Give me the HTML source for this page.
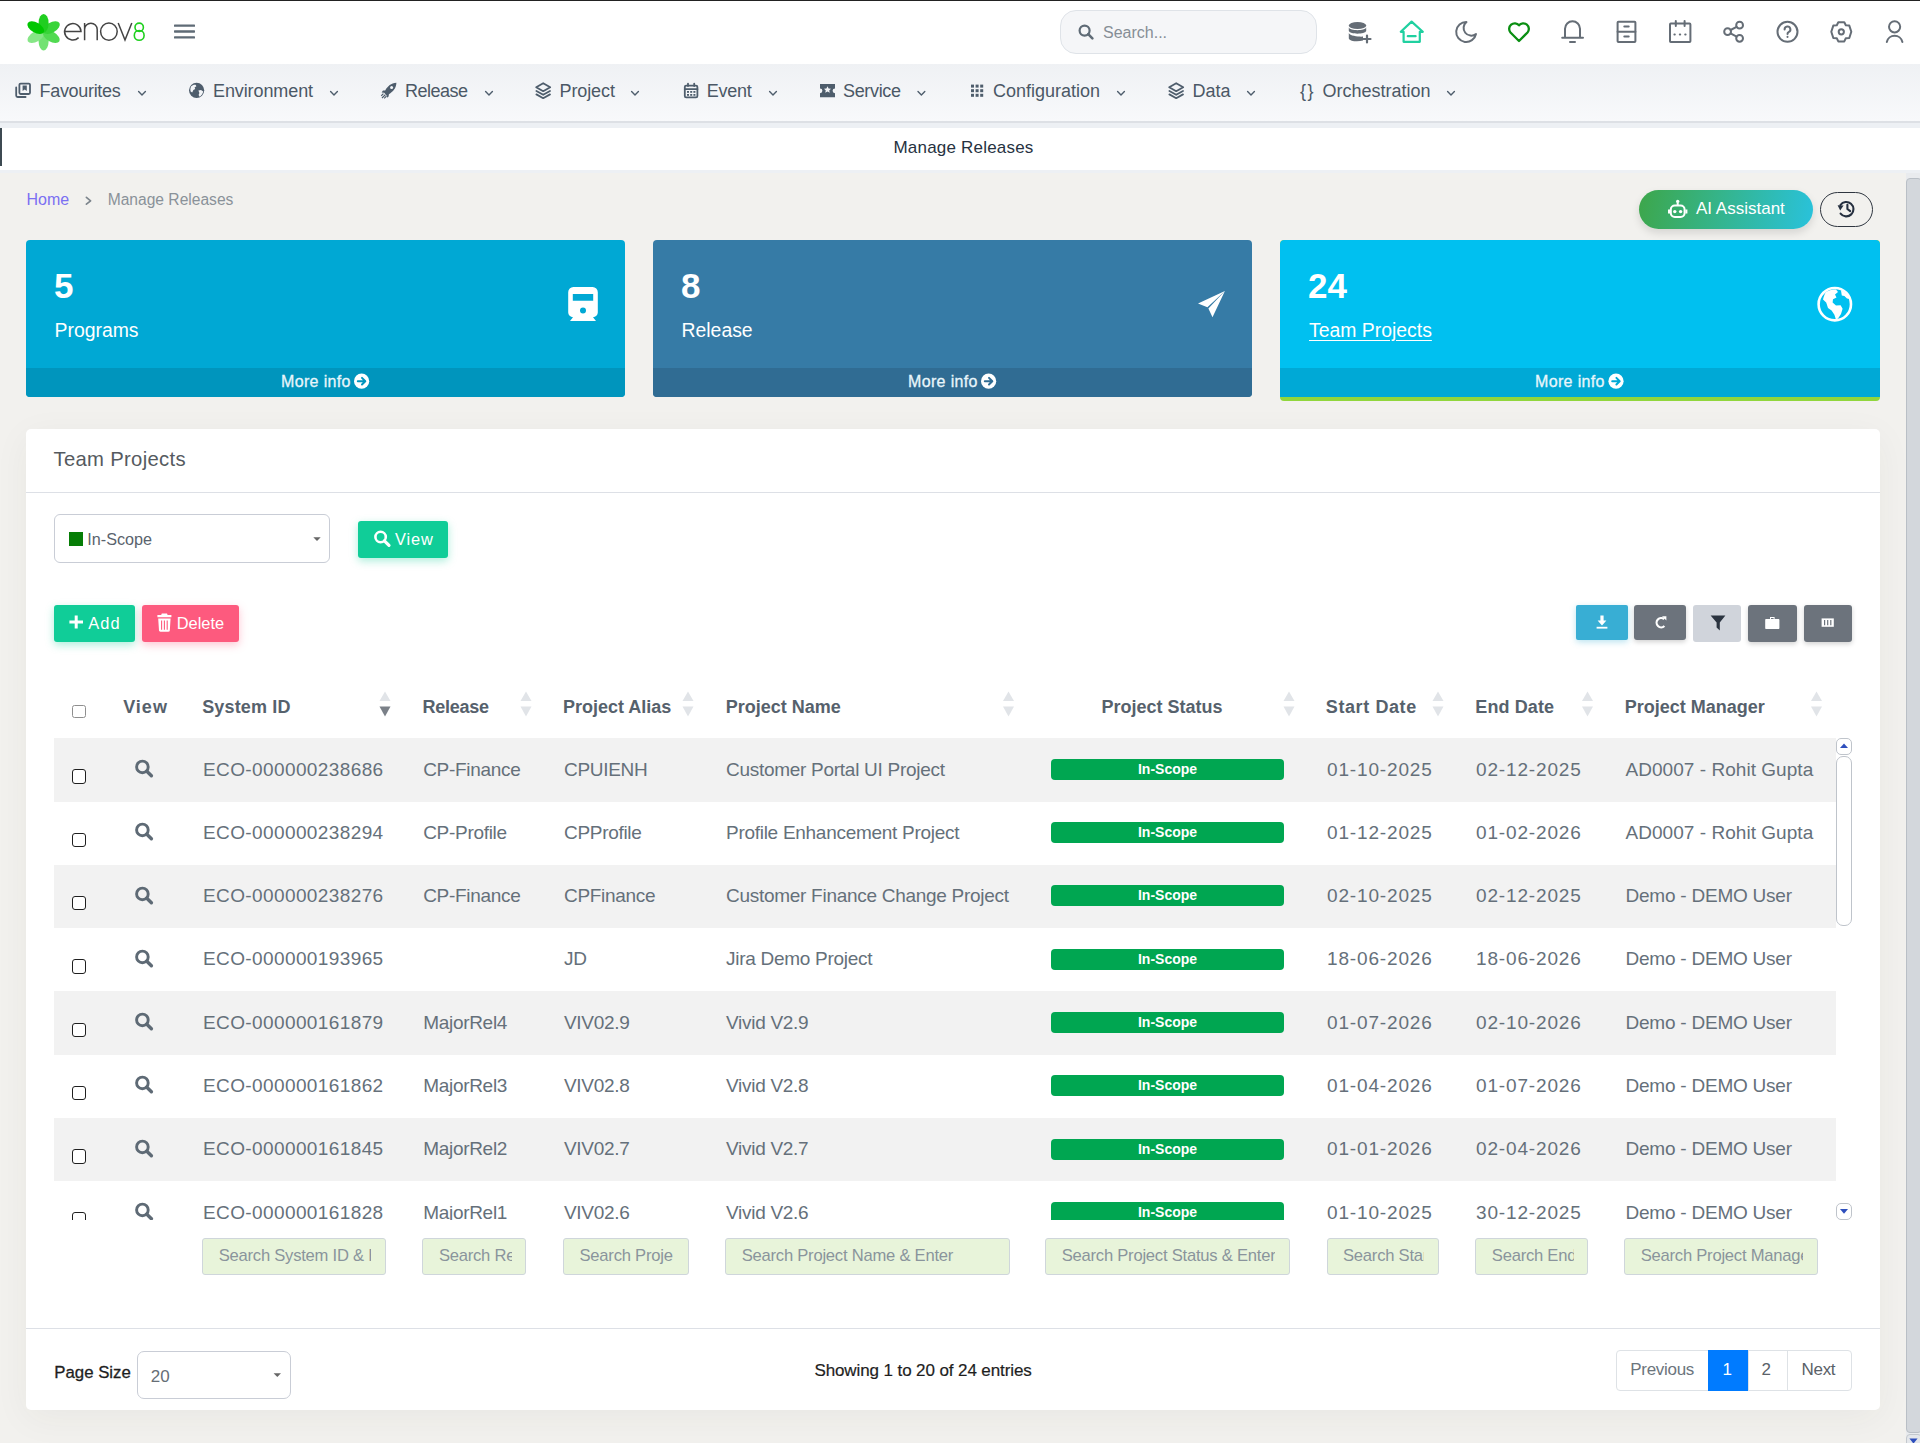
<!DOCTYPE html>
<html><head><meta charset="utf-8">
<style>
*{box-sizing:border-box;margin:0;padding:0}
html,body{width:1920px;height:1443px;overflow:hidden}
body{position:relative;background:#f2f1ee;font-family:"Liberation Sans",sans-serif;color:#5f6b76}
.abs{position:absolute}
#topline{left:0;top:0;width:1920px;height:1px;background:#222}
#header{left:0;top:1px;width:1920px;height:63px;background:#fff}
#nav{left:0;top:64px;width:1920px;height:57px;background:linear-gradient(#eff1f4,#f8f9fb)}
#navline{left:0;top:121px;width:1920px;height:2px;background:#dde0e5}
#navgap{left:0;top:123px;width:1920px;height:5px;background:#edf0f4}
#titlebar{left:0;top:128px;width:1920px;height:42px;background:#fff}
#titlegap{left:0;top:170px;width:1920px;height:3px;background:#edf0f4}
#titlemark{left:0;top:128px;width:2px;height:38px;background:#3d4a52}
.navitem{position:absolute;top:80px;height:22px;font-size:18px;color:#4b5866;white-space:nowrap;line-height:22px}
.navitem svg{position:absolute;top:3px}
.navitem .chev{position:absolute;top:0}
.cnum{font-size:35px;font-weight:bold;color:#fff;line-height:40px}
.clbl{font-size:19.4px;color:#fff;line-height:24px}
.cmore{top:372px;font-size:16px;color:#e8f6fb;line-height:20px;letter-spacing:0.35px;-webkit-text-stroke:0.3px #e8f6fb}
.th{top:697px;font-size:18px;font-weight:bold;line-height:20px;color:#56616c;white-space:nowrap}
.td{font-size:19px;line-height:20px;color:#65707a;white-space:nowrap}
.badge{width:233px;height:21px;border-radius:4px;background:#00a651;color:#fff;font-weight:bold;font-size:14px;line-height:21px;text-align:center}
.sin{top:1238.2px;height:36.6px;background:#e8f4da;border:1px solid #cfd6db;border-radius:3px;overflow:hidden;white-space:nowrap;font-size:16.6px;line-height:34px;color:#8a949c}
.sclip{position:absolute;left:15.5px;top:0;height:34px;overflow:hidden}
.sin span{position:absolute;left:0;top:0;letter-spacing:-0.23px}
.pg{top:1360px;font-size:17px;line-height:20px;letter-spacing:-0.3px}
.hicon{position:absolute;top:18px;width:26px;height:26px}
</style></head>
<body>
<div id="topline" class="abs"></div>
<div id="header" class="abs"></div>
<div id="nav" class="abs"></div>
<div id="navline" class="abs"></div>
<div id="navgap" class="abs"></div>
<div id="titlebar" class="abs"></div>
<div id="titlegap" class="abs"></div>
<div id="titlemark" class="abs"></div>

<svg class="abs" style="left:0;top:0" width="220" height="64" viewBox="0 0 220 64">
 <g transform="translate(43.6,32.2)">
  <ellipse cx="0" cy="-9" rx="5" ry="9.3" fill="#72e272" transform="rotate(180)"/>
  <ellipse cx="0" cy="-9" rx="5" ry="9.3" fill="#86e686" transform="rotate(240)"/>
  <ellipse cx="0" cy="-9" rx="5" ry="9.3" fill="#52da52" transform="rotate(120)"/>
  <ellipse cx="0" cy="-9" rx="5" ry="9.3" fill="#38d438" transform="rotate(60)"/>
  <ellipse cx="0" cy="-9" rx="5" ry="9.3" fill="#20ce20" transform="rotate(0)"/>
  <ellipse cx="0" cy="-9" rx="5" ry="9.3" fill="#00c600" transform="rotate(300)"/>
 </g>
 <g fill="none" stroke="#444" stroke-width="1.5">
  <path d="M64.8 31.5 H81 A8.2 8.2 0 1 0 78.6 37.6"/>
  <path d="M84.6 40.2 V23 M84.6 29.5 A6.3 6.3 0 0 1 97.2 29.5 V40.2"/>
  <ellipse cx="108.9" cy="31.6" rx="8.3" ry="8.6"/>
  <path d="M118.2 23 L125 40 L131.8 23"/>
 </g>
 <g fill="none" stroke="#1ed01e" stroke-width="1.6">
  <circle cx="139.2" cy="27.3" r="4.2"/>
  <circle cx="139.2" cy="35.4" r="4.9"/>
 </g>
 <g fill="#5f6b76">
  <rect x="174" y="24.4" width="21" height="2.4" rx="0.6"/>
  <rect x="174" y="30.3" width="21" height="2.4" rx="0.6"/>
  <rect x="174" y="36.2" width="21" height="2.4" rx="0.6"/>
 </g>
</svg>
<div class="abs" style="left:1060px;top:10px;width:257px;height:44px;border:1px solid #dfe3e8;border-radius:16px;background:#f5f6f8"></div>
<svg class="abs" style="left:1076px;top:22px" width="20" height="20" viewBox="0 0 20 20"><circle cx="8.6" cy="8.6" r="5" fill="none" stroke="#5f6b76" stroke-width="2.2"/><path d="M12.2 12.2 L16.4 16.4" stroke="#5f6b76" stroke-width="2.6" stroke-linecap="round"/></svg>
<div class="abs" style="left:1103px;top:22.5px;font-size:16px;line-height:20px;color:#868e96">Search...</div>
<svg class="abs" style="left:1340px;top:14px" width="580" height="36" viewBox="1340 14 580 36" fill="none" stroke="#656d76" stroke-width="2" stroke-linecap="round" stroke-linejoin="round">
 <!-- db plus -->
 <g fill="#656d76" stroke="none">
  <ellipse cx="1357.5" cy="25.5" rx="8.7" ry="3.6"/>
  <path d="M1348.8 27.5 C1350 31 1365 31 1366.2 27.5 V31 C1365 34.5 1350 34.5 1348.8 31Z"/>
  <path d="M1348.8 33 C1350 36.5 1362 37 1363 36.5 V40.5 C1358 42 1350 41.5 1348.8 38.5Z"/>
 </g>
 <path d="M1367 35.5 V42.5 M1363.5 39 H1370.5" stroke-width="2.2"/>
 <!-- home teal -->
 <g stroke="#20d0a0" stroke-width="2.2">
  <path d="M1400.8 31.8 L1411.6 21.6 L1422.8 31.8 H1419.8 V41.8 H1403.6 V31.8 Z"/>
  <path d="M1407.8 36.2 H1415.6"/>
 </g>
 <!-- moon -->
 <path d="M1466.5 22 A10 10 0 1 0 1476 34 A7.6 7.6 0 0 1 1466.5 22 Z"/>
 <!-- heart green -->
 <path stroke="#0a8f12" stroke-width="2.3" d="M1519 41 L1510.5 32.5 A5.2 5.2 0 0 1 1519 25.3 A5.2 5.2 0 0 1 1527.5 32.5 Z"/>
 <!-- bell -->
 <path d="M1572.5 21.3 A7.5 7.5 0 0 1 1580 28.8 V37.8 H1565 V28.8 A7.5 7.5 0 0 1 1572.5 21.3 Z M1562.2 37.8 H1583 M1570 42 H1575"/>
 <!-- cabinet -->
 <rect x="1617.6" y="21.8" width="17.8" height="20.2" rx="0.8"/>
 <path d="M1617.6 31.8 H1635.4 M1624.3 26.5 H1628.7 M1624.3 36.5 H1628.7"/>
 <!-- calendar -->
 <rect x="1670" y="23.6" width="20.4" height="18.4" rx="0.8"/>
 <path d="M1675.8 21 V26 M1684.6 21 V26 M1674.4 34.6 H1674.8 M1679.8 34.6 H1680.2 M1685.2 34.6 H1685.6"/>
 <!-- share -->
 <circle cx="1727.6" cy="31.7" r="3.4"/><circle cx="1739.6" cy="25.2" r="3.4"/><circle cx="1739.6" cy="38.3" r="3.4"/>
 <path d="M1730.6 30 L1736.6 26.8 M1730.6 33.4 L1736.6 36.6"/>
 <!-- help -->
 <circle cx="1787.5" cy="31.8" r="10"/>
 <path d="M1784.6 29.4 A2.9 2.9 0 1 1 1788.6 32.1 C1787.8 32.5 1787.5 33 1787.5 34 M1787.5 36.8 V37"/>
 <!-- gear -->
 <path d="M1838.3 22.2 L1844.3 22.2 L1845.8 25.3 L1849.3 25.6 L1851.3 31.8 L1849.3 38 L1845.8 38.3 L1844.3 41.4 L1838.3 41.4 L1836.8 38.3 L1833.3 38 L1831.3 31.8 L1833.3 25.6 L1836.8 25.3 Z"/>
 <circle cx="1841.3" cy="31.8" r="2.6"/>
 <!-- user -->
 <circle cx="1894.6" cy="26.8" r="5.6"/>
 <path d="M1886.8 42 A8 8 0 0 1 1902.4 42"/>
</svg>

<svg class="abs" style="left:0;top:64px" width="1500" height="57" viewBox="0 64 1500 57">
 <g fill="none" stroke="#4e5d6c" stroke-width="1.8" stroke-linejoin="round" stroke-linecap="round">
  <!-- favourites -->
  <path d="M16.2 87.5 V95.6 C16.2 96.4 16.8 97 17.6 97 H25.6"/>
  <rect x="19.4" y="83.6" width="10.6" height="10.4" rx="1.2"/>
  <!-- chevrons -->
  <path d="M138.6 91.6 L142 95 L145.4 91.6" stroke-width="1.4"/>
  <path d="M330.6 91.6 L334 95 L337.4 91.6" stroke-width="1.4"/>
  <path d="M485.6 91.6 L489 95 L492.4 91.6" stroke-width="1.4"/>
  <path d="M631.6 91.6 L635 95 L638.4 91.6" stroke-width="1.4"/>
  <path d="M769.6 91.6 L773 95 L776.4 91.6" stroke-width="1.4"/>
  <path d="M918 91.6 L921.4 95 L924.8 91.6" stroke-width="1.4"/>
  <path d="M1117.6 91.6 L1121 95 L1124.4 91.6" stroke-width="1.4"/>
  <path d="M1247.6 91.6 L1251 95 L1254.4 91.6" stroke-width="1.4"/>
  <path d="M1447.6 91.6 L1451 95 L1454.4 91.6" stroke-width="1.4"/>
  <!-- project layers -->
  <path d="M543.2 83.2 L550.2 87.2 L543.2 91.2 L536.2 87.2 Z"/>
  <path d="M536.4 91 L543.2 94.8 L550 91"/>
  <path d="M536.4 94.4 L543.2 98.2 L550 94.4"/>
  <!-- data layers -->
  <path d="M1176.2 83.2 L1183.2 87.2 L1176.2 91.2 L1169.2 87.2 Z"/>
  <path d="M1169.4 91 L1176.2 94.8 L1183 91"/>
  <path d="M1169.4 94.4 L1176.2 98.2 L1183 94.4"/>
  <!-- event calendar -->
  <rect x="684.8" y="85.6" width="12.6" height="11.8" rx="1.4"/>
  <path d="M684.8 89.2 H697.4 M688 83.6 V86 M694.2 83.6 V86"/>
 </g>
 <g fill="#4e5d6c">
  <!-- favourites bookmark -->
  <path d="M22.6 85.4 H26.8 V91 L24.7 89.4 L22.6 91 Z"/>
  <!-- calendar dots -->
  <rect x="687" y="91" width="2" height="1.8"/><rect x="690.2" y="91" width="2" height="1.8"/><rect x="693.4" y="91" width="2" height="1.8"/>
  <rect x="687" y="94" width="2" height="1.8"/><rect x="690.2" y="94" width="2" height="1.8"/><rect x="693.4" y="94" width="2" height="1.8"/>
  <!-- globe -->
  <circle cx="196.6" cy="90.3" r="7.6"/>
  <!-- rocket -->
  <path d="M396.4 82.8 C391 83 387.8 86.2 385.2 90.4 L383 90.6 L381.6 92.4 L384.2 92.8 L386.6 95.4 L387 97.8 L388.6 96.4 L388.9 94.2 C393 91.6 396.2 88.4 396.4 82.8 Z"/>
  <path d="M382 98 L385.4 94.6 M381.2 95.8 L383.4 93.6 M384.2 98.4 L386.4 96.2" stroke="#4e5d6c" stroke-width="1.2"/>
  <!-- ticket -->
  <path d="M820 84 H835 V88.4 A2.4 2.4 0 0 0 835 93.2 V97.2 H820 V93.2 A2.4 2.4 0 0 0 820 88.4 Z"/>
  <!-- config grid -->
  <rect x="971" y="84.6" width="3" height="3"/><rect x="975.6" y="84.6" width="3" height="3"/><rect x="980.2" y="84.6" width="3" height="3"/>
  <rect x="971" y="89.2" width="3" height="3"/><rect x="975.6" y="89.2" width="3" height="3"/><rect x="980.2" y="89.2" width="3" height="3"/>
  <rect x="971" y="93.8" width="3" height="3"/><rect x="975.6" y="93.8" width="3" height="3"/><rect x="980.2" y="93.8" width="3" height="3"/>
 </g>
 <g fill="#f3f5f8">
  <!-- globe continents -->
  <path d="M191 86.5 C192.5 85 194 84.6 195.6 84.8 L196.4 86.2 L194.6 87.4 L195.2 89 L193.4 90 L192.2 92.4 L190.6 91.4 C190.2 89.6 190.4 88 191 86.5 Z"/>
  <path d="M198.4 90.6 L201 90 L203.2 91.6 C202.8 93.8 201.4 95.8 199.6 96.8 L198.6 95 L199.4 93 Z"/>
  <circle cx="397.6" cy="86.2" r="0" />
  <path d="M827.5 86.2 L828.6 88.6 L831 88.8 L829.2 90.4 L829.8 92.8 L827.5 91.5 L825.2 92.8 L825.8 90.4 L824 88.8 L826.4 88.6 Z"/>
 </g>
 <circle cx="391.6" cy="87.6" r="1.5" fill="#f3f5f8"/>
</svg>
<div class="navitem" style="left:39.5px;letter-spacing:-0.31px">Favourites</div>
<div class="navitem" style="left:213px;letter-spacing:-0.1px">Environment</div>
<div class="navitem" style="left:405px;letter-spacing:-0.5px">Release</div>
<div class="navitem" style="left:559.5px;letter-spacing:-0.1px">Project</div>
<div class="navitem" style="left:706.8px;letter-spacing:-0.25px">Event</div>
<div class="navitem" style="left:843px;letter-spacing:-0.33px">Service</div>
<div class="navitem" style="left:993px">Configuration</div>
<div class="navitem" style="left:1192.4px">Data</div>
<div class="navitem" style="left:1300px;letter-spacing:1.5px">{}</div>
<div class="navitem" style="left:1322.4px">Orchestration</div>

<div class="abs" style="left:0;top:138px;width:1927px;text-align:center;font-size:17px;line-height:20px;color:#263241;letter-spacing:0.2px">Manage Releases</div>
<div class="abs" style="left:26.5px;top:190px;font-size:16px;line-height:20px;color:#7b6ff2">Home</div>
<svg class="abs" style="left:80px;top:190px" width="20" height="20" viewBox="80 190 20 20"><path d="M86.4 197.4 L90.6 200.8 L86.4 204.2" fill="none" stroke="#7d858c" stroke-width="1.7" stroke-linecap="round" stroke-linejoin="round"/></svg>
<div class="abs" style="left:107.7px;top:190px;font-size:15.6px;line-height:20px;color:#8a9299">Manage Releases</div>
<div class="abs" style="left:1639px;top:190px;width:174px;height:39px;border-radius:20px;background:linear-gradient(100deg,#3da64a 0%,#35b48a 45%,#29c2dc 100%);box-shadow:0 4px 8px rgba(0,0,0,0.12)"></div>
<svg class="abs" style="left:1664px;top:196px" width="28" height="26" viewBox="1664 196 28 26">
 <g fill="none" stroke="#fff" stroke-width="2" stroke-linejoin="round">
  <rect x="1670.8" y="205.6" width="13.8" height="11.4" rx="4"/>
  <path d="M1677.7 202.8 V205.6 M1669 209.6 V213.6 M1686.4 209.6 V213.6"/>
 </g>
 <circle cx="1677.7" cy="201.4" r="1.7" fill="#fff"/>
 <circle cx="1674.8" cy="211.6" r="1.7" fill="#fff"/><circle cx="1680.6" cy="211.6" r="1.7" fill="#fff"/>
</svg>
<div class="abs" style="left:1696px;top:199px;font-size:17px;line-height:20px;color:#fff">AI Assistant</div>
<div class="abs" style="left:1820px;top:192px;width:53px;height:35px;border-radius:18px;border:1.3px solid #2f3640"></div>
<svg class="abs" style="left:1834px;top:198px" width="24" height="22" viewBox="1834 198 24 22">
 <g fill="none" stroke="#263040" stroke-width="2.1" stroke-linecap="round" stroke-linejoin="round">
  <path d="M1840.4 205 A7.2 7.2 0 1 1 1840.6 213.6"/>
  <path d="M1847.4 204.8 V209 L1850.2 211.2"/>
 </g>
 <path d="M1837.6 205.2 L1843.6 205.6 L1840.2 210.4 Z" fill="#263040"/>
</svg>

<!-- cards -->
<div class="abs" style="left:26px;top:240px;width:599px;height:157px;background:#00a8d4;border-radius:4px;overflow:hidden"><div class="abs" style="left:0;top:128px;width:599px;height:29px;background:#0095bd"></div></div>
<div class="abs" style="left:653px;top:240px;width:599px;height:157px;background:#367ba6;border-radius:4px;overflow:hidden"><div class="abs" style="left:0;top:128px;width:599px;height:29px;background:#306c93"></div></div>
<div class="abs" style="left:1280px;top:240px;width:600px;height:161px;background:#91d63c;border-radius:4px;overflow:hidden"><div class="abs" style="left:0;top:0;width:600px;height:157px;background:#00c0f0;border-radius:4px 4px 0 0"></div><div class="abs" style="left:0;top:128px;width:600px;height:29px;background:#00a9d6"></div></div>

<div class="abs cnum" style="left:54px;top:266px">5</div>
<div class="abs cnum" style="left:681px;top:266px">8</div>
<div class="abs cnum" style="left:1308px;top:266px">24</div>
<div class="abs clbl" style="left:54.5px;top:318px">Programs</div>
<div class="abs clbl" style="left:681.5px;top:318px">Release</div>
<div class="abs clbl" style="left:1309px;top:318px;text-decoration:underline;text-underline-offset:3px">Team Projects</div>
<div class="abs cmore" style="left:281px">More info</div>
<div class="abs cmore" style="left:908px">More info</div>
<div class="abs cmore" style="left:1535px">More info</div>
<svg class="abs" style="left:0;top:360px" width="1920" height="40" viewBox="0 360 1920 40">
 <g fill="#fff">
  <circle cx="361.6" cy="381.2" r="7.6"/><circle cx="988.6" cy="381.2" r="7.6"/><circle cx="1616" cy="381.2" r="7.6"/>
 </g>
 <g fill="none" stroke-width="2" stroke-linecap="round" stroke-linejoin="round">
  <path stroke="#0095bd" d="M357.8 381.2 H365 M362 377.9 L365.3 381.2 L362 384.5"/>
  <path stroke="#306c93" d="M984.8 381.2 H992 M989 377.9 L992.3 381.2 L989 384.5"/>
  <path stroke="#00a9d6" d="M1612.2 381.2 H1619.4 M1616.4 377.9 L1619.7 381.2 L1616.4 384.5"/>
 </g>
</svg>
<svg class="abs" style="left:560px;top:280px" width="700" height="50" viewBox="560 280 700 50">
 <path fill="#fff" d="M573.4 287 H592.6 A5.2 5.2 0 0 1 597.8 292.2 V312.4 A4.8 4.8 0 0 1 593 317.2 L596 321 H570 L573 317.2 A4.8 4.8 0 0 1 568.2 312.4 V292.2 A5.2 5.2 0 0 1 573.4 287 Z M572.8 294 V300.8 H593.2 V294 Z M583 307.4 A3 3 0 1 0 583 313.4 A3 3 0 1 0 583 307.4 Z" fill-rule="evenodd"/>
 <path fill="#fff" d="M1224.9 291.1 L1198 303.5 L1207.4 307.2 Z M1224.9 291.1 L1208.4 308.4 L1212.5 317.3 Z"/>
</svg>
<svg class="abs" style="left:1812px;top:282px" width="46" height="44" viewBox="1812 282 46 44">
 <circle cx="1834.8" cy="304.2" r="16.2" fill="none" stroke="#fff" stroke-width="2.6"/>
 <path fill="#fff" d="M1826 292 C1829 290 1833 289 1836 289.6 L1838 292 L1835 294.6 L1836.5 297.6 L1833 299.2 L1832.6 302.6 L1836 305.4 L1840.6 305.2 L1842.6 308.8 L1841 314 L1838 318.6 L1836 319.8 L1834.4 314.8 L1831.6 310.6 L1828 308 L1826.2 302.6 L1823 299.6 C1823.6 296.6 1824.6 294 1826 292 Z"/>
 <path fill="#fff" d="M1841 290.6 C1845 292 1848.6 295.6 1850 299 L1847 298.6 L1844.4 296 L1841.8 295.6 Z"/>
</svg>

<div class="abs" style="left:26px;top:429px;width:1854px;height:981px;background:#fff;border-radius:5px;box-shadow:0 8px 36px rgba(60,50,30,0.05)"></div>
<div class="abs" style="left:53.5px;top:447px;font-size:20.3px;line-height:24px;color:#555a60;letter-spacing:0.3px">Team Projects</div>
<div class="abs" style="left:26px;top:491.5px;width:1854px;height:1px;background:#dde0e6"></div>
<div class="abs" style="left:54px;top:514px;width:276px;height:49px;border:1px solid #c9cdd6;border-radius:6px;background:#fff"></div>
<div class="abs" style="left:69px;top:532.3px;width:13.6px;height:13.4px;background:#067d06"></div>
<div class="abs" style="left:87.3px;top:529px;font-size:16.2px;line-height:20px;color:#5a636d">In-Scope</div>
<svg class="abs" style="left:310px;top:534px" width="14" height="10"><path d="M3.3 3.3 H10.7 L7 7 Z" fill="#666"/></svg>
<div class="abs" style="left:358px;top:521px;width:90px;height:37px;background:#10cd98;border-radius:3px;box-shadow:0 3px 8px rgba(16,205,152,0.35)"></div>
<svg class="abs" style="left:372px;top:528px" width="22" height="22" viewBox="0 0 22 22"><circle cx="8.6" cy="9" r="5.2" fill="none" stroke="#fff" stroke-width="2.6"/><path d="M12.4 12.8 L17 17.4" stroke="#fff" stroke-width="3.2" stroke-linecap="round"/></svg>
<div class="abs" style="left:395px;top:529px;font-size:16.4px;line-height:20px;color:#fff;letter-spacing:0.9px">View</div>
<div class="abs" style="left:54px;top:605px;width:81px;height:37px;background:#10cd98;border-radius:3px;box-shadow:0 3px 8px rgba(16,205,152,0.35)"></div>
<svg class="abs" style="left:66px;top:612px" width="20" height="20" viewBox="0 0 20 20"><path d="M10.2 3.4 V16.6 M3.4 10 H17" stroke="#fff" stroke-width="3" /></svg>
<div class="abs" style="left:88.3px;top:613px;font-size:16.4px;line-height:20px;color:#fff;letter-spacing:1.1px">Add</div>
<div class="abs" style="left:142px;top:605px;width:97px;height:37px;background:#fd5a7e;border-radius:3px;box-shadow:0 3px 8px rgba(253,90,126,0.35)"></div>
<svg class="abs" style="left:155px;top:612px" width="20" height="22" viewBox="0 0 20 22"><path fill="#fff" d="M6.8 1.6 H12 L12.6 3 H16.4 V5.2 H2.4 V3 H6.2 Z M3.2 6.4 H15.6 L14.8 18.6 C14.7 19.4 14.2 19.8 13.4 19.8 H5.4 C4.6 19.8 4.1 19.4 4 18.6 Z"/><path d="M6.6 8.4 V17.8 M9.4 8.4 V17.8 M12.2 8.4 V17.8" stroke="#fd5a7e" stroke-width="1.1"/></svg>
<div class="abs" style="left:176.7px;top:613px;font-size:16.4px;line-height:20px;color:#fff">Delete</div>
<div class="abs" style="left:1576px;top:605px;width:52px;height:35px;background:#38aed4;border-radius:2px;box-shadow:0 2px 6px rgba(56,174,212,0.35)"></div>
<div class="abs" style="left:1634px;top:605px;width:52px;height:35px;background:#6c737c;border-radius:3px;box-shadow:0 2px 5px rgba(0,0,0,0.18)"></div>
<div class="abs" style="left:1693px;top:605px;width:48px;height:37px;background:#d0d4db;border-radius:3px"></div>
<div class="abs" style="left:1748px;top:605px;width:49px;height:37px;background:#6c737c;border-radius:3px;box-shadow:0 2px 5px rgba(0,0,0,0.18)"></div>
<div class="abs" style="left:1804px;top:605px;width:48px;height:37px;background:#6c737c;border-radius:3px;box-shadow:0 2px 5px rgba(0,0,0,0.18)"></div>
<svg class="abs" style="left:1576px;top:605px" width="280" height="40" viewBox="1576 605 280 40">
 <path fill="#fff" d="M1600.4 615.6 H1603.6 V620.6 H1606.4 L1602 625.4 L1597.6 620.6 H1600.4 Z"/>
 <rect x="1596.6" y="626.8" width="10.8" height="1.8" fill="#fff"/>
 <path d="M1664.2 619.2 A4.6 4.6 0 1 0 1664.4 626" fill="none" stroke="#fff" stroke-width="2.2"/>
 <path d="M1662 616.2 L1666.4 616.2 L1666.4 620.6 Z" fill="#fff"/>
 <path fill="#2b3440" d="M1710.6 615.6 H1725.4 L1719.8 622.6 V630.6 L1716.6 627.6 V622.6 Z"/>
 <path fill="#fff" d="M1770 617 H1774.6 V619 H1778.4 C1779 619 1779.4 619.4 1779.4 620 V628 C1779.4 628.6 1779 629 1778.4 629 H1766.2 C1765.6 629 1765.2 628.6 1765.2 628 V620 C1765.2 619.4 1765.6 619 1766.2 619 H1770 Z M1771 618 V619 H1773.6 V618 Z"/>
 <path fill="#fff" d="M1821.6 618.4 H1833.8 V626.8 H1821.6 Z"/>
 <path d="M1824.6 620 V625.2 M1827.7 620 V625.2 M1830.8 620 V625.2" stroke="#6c737c" stroke-width="1.2"/>
</svg>
<div class="abs th" style="left:123.2px;letter-spacing:1.0px">View</div>
<div class="abs th" style="left:202.2px;letter-spacing:0.15px">System ID</div>
<div class="abs th" style="left:422.4px;letter-spacing:-0.23px">Release</div>
<div class="abs th" style="left:563px;letter-spacing:0px">Project Alias</div>
<div class="abs th" style="left:725.8px;letter-spacing:0px">Project Name</div>
<div class="abs th" style="left:1101.4px;letter-spacing:0px">Project Status</div>
<div class="abs th" style="left:1325.8px;letter-spacing:0.6px">Start Date</div>
<div class="abs th" style="left:1475.3px;letter-spacing:0.1px">End Date</div>
<div class="abs th" style="left:1624.7px;letter-spacing:0px">Project Manager</div>
<div class="abs" style="left:72px;top:704.7px;width:13.5px;height:13.5px;border:1px solid #8f8f8f;border-radius:2.5px;background:#fff"></div>
<svg class="abs" style="left:0;top:680px" width="1920" height="50" viewBox="0 680 1920 50"><path d="M379.5 701 L385 691.6 L390.5 701 Z" fill="#e1e4e8"/><path d="M379.5 706.6 L385 716.4 L390.5 706.6 Z" fill="#7a8088"/><path d="M520.5 701 L526 691.6 L531.5 701 Z" fill="#e1e4e8"/><path d="M520.5 706.6 L526 716.4 L531.5 706.6 Z" fill="#e1e4e8"/><path d="M682.5 701 L688 691.6 L693.5 701 Z" fill="#e1e4e8"/><path d="M682.5 706.6 L688 716.4 L693.5 706.6 Z" fill="#e1e4e8"/><path d="M1003.0 701 L1008.5 691.6 L1014.0 701 Z" fill="#e1e4e8"/><path d="M1003.0 706.6 L1008.5 716.4 L1014.0 706.6 Z" fill="#e1e4e8"/><path d="M1283.5 701 L1289 691.6 L1294.5 701 Z" fill="#e1e4e8"/><path d="M1283.5 706.6 L1289 716.4 L1294.5 706.6 Z" fill="#e1e4e8"/><path d="M1432.5 701 L1438 691.6 L1443.5 701 Z" fill="#e1e4e8"/><path d="M1432.5 706.6 L1438 716.4 L1443.5 706.6 Z" fill="#e1e4e8"/><path d="M1582.0 701 L1587.5 691.6 L1593.0 701 Z" fill="#e1e4e8"/><path d="M1582.0 706.6 L1587.5 716.4 L1593.0 706.6 Z" fill="#e1e4e8"/><path d="M1811.0 701 L1816.5 691.6 L1822.0 701 Z" fill="#e1e4e8"/><path d="M1811.0 706.6 L1816.5 716.4 L1822.0 706.6 Z" fill="#e1e4e8"/></svg>
<div class="abs" style="left:54px;top:738px;width:1800px;height:482px;overflow:hidden">
<div class="abs" style="left:0;top:0.00px;width:1782px;height:63.59px;background:#f2f2f2"></div>
<div class="abs" style="left:18px;top:31.40px;width:14.4px;height:14.4px;border:1.3px solid #1f1f1f;border-radius:3px;background:#fff"></div>
<svg class="abs" style="left:79px;top:20.00px" width="22" height="22" viewBox="0 0 22 22"><circle cx="9.4" cy="8.9" r="5.8" fill="none" stroke="#5e6a75" stroke-width="2.9"/><path d="M13.8 13.2 L18.4 17.8" stroke="#5e6a75" stroke-width="3.4" stroke-linecap="round"/></svg>
<div class="abs td" style="left:149px;top:21.50px;letter-spacing:0.39px">ECO-000000238686</div>
<div class="abs td" style="left:369.2px;top:21.50px;letter-spacing:-0.3px">CP-Finance</div>
<div class="abs td" style="left:510px;top:21.50px;letter-spacing:-0.3px">CPUIENH</div>
<div class="abs td" style="left:672px;top:21.50px;letter-spacing:-0.28px">Customer Portal UI Project</div>
<div class="abs td" style="left:1273px;top:21.50px;letter-spacing:0.85px">01-10-2025</div>
<div class="abs td" style="left:1422px;top:21.50px;letter-spacing:0.85px">02-12-2025</div>
<div class="abs td" style="left:1571.5px;top:21.50px;letter-spacing:0.04px">AD0007 - Rohit Gupta</div>
<div class="abs badge" style="left:997px;top:20.80px">In-Scope</div>
<div class="abs" style="left:18px;top:94.69px;width:14.4px;height:14.4px;border:1.3px solid #1f1f1f;border-radius:3px;background:#fff"></div>
<svg class="abs" style="left:79px;top:83.29px" width="22" height="22" viewBox="0 0 22 22"><circle cx="9.4" cy="8.9" r="5.8" fill="none" stroke="#5e6a75" stroke-width="2.9"/><path d="M13.8 13.2 L18.4 17.8" stroke="#5e6a75" stroke-width="3.4" stroke-linecap="round"/></svg>
<div class="abs td" style="left:149px;top:84.79px;letter-spacing:0.39px">ECO-000000238294</div>
<div class="abs td" style="left:369.2px;top:84.79px;letter-spacing:-0.3px">CP-Profile</div>
<div class="abs td" style="left:510px;top:84.79px;letter-spacing:-0.3px">CPProfile</div>
<div class="abs td" style="left:672px;top:84.79px;letter-spacing:-0.28px">Profile Enhancement Project</div>
<div class="abs td" style="left:1273px;top:84.79px;letter-spacing:0.85px">01-12-2025</div>
<div class="abs td" style="left:1422px;top:84.79px;letter-spacing:0.85px">01-02-2026</div>
<div class="abs td" style="left:1571.5px;top:84.79px;letter-spacing:0.04px">AD0007 - Rohit Gupta</div>
<div class="abs badge" style="left:997px;top:84.09px">In-Scope</div>
<div class="abs" style="left:0;top:126.58px;width:1782px;height:63.59px;background:#f2f2f2"></div>
<div class="abs" style="left:18px;top:157.98px;width:14.4px;height:14.4px;border:1.3px solid #1f1f1f;border-radius:3px;background:#fff"></div>
<svg class="abs" style="left:79px;top:146.58px" width="22" height="22" viewBox="0 0 22 22"><circle cx="9.4" cy="8.9" r="5.8" fill="none" stroke="#5e6a75" stroke-width="2.9"/><path d="M13.8 13.2 L18.4 17.8" stroke="#5e6a75" stroke-width="3.4" stroke-linecap="round"/></svg>
<div class="abs td" style="left:149px;top:148.08px;letter-spacing:0.39px">ECO-000000238276</div>
<div class="abs td" style="left:369.2px;top:148.08px;letter-spacing:-0.3px">CP-Finance</div>
<div class="abs td" style="left:510px;top:148.08px;letter-spacing:-0.3px">CPFinance</div>
<div class="abs td" style="left:672px;top:148.08px;letter-spacing:-0.28px">Customer Finance Change Project</div>
<div class="abs td" style="left:1273px;top:148.08px;letter-spacing:0.85px">02-10-2025</div>
<div class="abs td" style="left:1422px;top:148.08px;letter-spacing:0.85px">02-12-2025</div>
<div class="abs td" style="left:1571.5px;top:148.08px;letter-spacing:-0.23px">Demo - DEMO User</div>
<div class="abs badge" style="left:997px;top:147.38px">In-Scope</div>
<div class="abs" style="left:18px;top:221.27px;width:14.4px;height:14.4px;border:1.3px solid #1f1f1f;border-radius:3px;background:#fff"></div>
<svg class="abs" style="left:79px;top:209.87px" width="22" height="22" viewBox="0 0 22 22"><circle cx="9.4" cy="8.9" r="5.8" fill="none" stroke="#5e6a75" stroke-width="2.9"/><path d="M13.8 13.2 L18.4 17.8" stroke="#5e6a75" stroke-width="3.4" stroke-linecap="round"/></svg>
<div class="abs td" style="left:149px;top:211.37px;letter-spacing:0.39px">ECO-000000193965</div>
<div class="abs td" style="left:510px;top:211.37px;letter-spacing:-0.3px">JD</div>
<div class="abs td" style="left:672px;top:211.37px;letter-spacing:-0.28px">Jira Demo Project</div>
<div class="abs td" style="left:1273px;top:211.37px;letter-spacing:0.85px">18-06-2026</div>
<div class="abs td" style="left:1422px;top:211.37px;letter-spacing:0.85px">18-06-2026</div>
<div class="abs td" style="left:1571.5px;top:211.37px;letter-spacing:-0.23px">Demo - DEMO User</div>
<div class="abs badge" style="left:997px;top:210.67px">In-Scope</div>
<div class="abs" style="left:0;top:253.16px;width:1782px;height:63.59px;background:#f2f2f2"></div>
<div class="abs" style="left:18px;top:284.56px;width:14.4px;height:14.4px;border:1.3px solid #1f1f1f;border-radius:3px;background:#fff"></div>
<svg class="abs" style="left:79px;top:273.16px" width="22" height="22" viewBox="0 0 22 22"><circle cx="9.4" cy="8.9" r="5.8" fill="none" stroke="#5e6a75" stroke-width="2.9"/><path d="M13.8 13.2 L18.4 17.8" stroke="#5e6a75" stroke-width="3.4" stroke-linecap="round"/></svg>
<div class="abs td" style="left:149px;top:274.66px;letter-spacing:0.39px">ECO-000000161879</div>
<div class="abs td" style="left:369.2px;top:274.66px;letter-spacing:-0.3px">MajorRel4</div>
<div class="abs td" style="left:510px;top:274.66px;letter-spacing:-0.3px">VIV02.9</div>
<div class="abs td" style="left:672px;top:274.66px;letter-spacing:-0.28px">Vivid V2.9</div>
<div class="abs td" style="left:1273px;top:274.66px;letter-spacing:0.85px">01-07-2026</div>
<div class="abs td" style="left:1422px;top:274.66px;letter-spacing:0.85px">02-10-2026</div>
<div class="abs td" style="left:1571.5px;top:274.66px;letter-spacing:-0.23px">Demo - DEMO User</div>
<div class="abs badge" style="left:997px;top:273.96px">In-Scope</div>
<div class="abs" style="left:18px;top:347.85px;width:14.4px;height:14.4px;border:1.3px solid #1f1f1f;border-radius:3px;background:#fff"></div>
<svg class="abs" style="left:79px;top:336.45px" width="22" height="22" viewBox="0 0 22 22"><circle cx="9.4" cy="8.9" r="5.8" fill="none" stroke="#5e6a75" stroke-width="2.9"/><path d="M13.8 13.2 L18.4 17.8" stroke="#5e6a75" stroke-width="3.4" stroke-linecap="round"/></svg>
<div class="abs td" style="left:149px;top:337.95px;letter-spacing:0.39px">ECO-000000161862</div>
<div class="abs td" style="left:369.2px;top:337.95px;letter-spacing:-0.3px">MajorRel3</div>
<div class="abs td" style="left:510px;top:337.95px;letter-spacing:-0.3px">VIV02.8</div>
<div class="abs td" style="left:672px;top:337.95px;letter-spacing:-0.28px">Vivid V2.8</div>
<div class="abs td" style="left:1273px;top:337.95px;letter-spacing:0.85px">01-04-2026</div>
<div class="abs td" style="left:1422px;top:337.95px;letter-spacing:0.85px">01-07-2026</div>
<div class="abs td" style="left:1571.5px;top:337.95px;letter-spacing:-0.23px">Demo - DEMO User</div>
<div class="abs badge" style="left:997px;top:337.25px">In-Scope</div>
<div class="abs" style="left:0;top:379.74px;width:1782px;height:63.59px;background:#f2f2f2"></div>
<div class="abs" style="left:18px;top:411.14px;width:14.4px;height:14.4px;border:1.3px solid #1f1f1f;border-radius:3px;background:#fff"></div>
<svg class="abs" style="left:79px;top:399.74px" width="22" height="22" viewBox="0 0 22 22"><circle cx="9.4" cy="8.9" r="5.8" fill="none" stroke="#5e6a75" stroke-width="2.9"/><path d="M13.8 13.2 L18.4 17.8" stroke="#5e6a75" stroke-width="3.4" stroke-linecap="round"/></svg>
<div class="abs td" style="left:149px;top:401.24px;letter-spacing:0.39px">ECO-000000161845</div>
<div class="abs td" style="left:369.2px;top:401.24px;letter-spacing:-0.3px">MajorRel2</div>
<div class="abs td" style="left:510px;top:401.24px;letter-spacing:-0.3px">VIV02.7</div>
<div class="abs td" style="left:672px;top:401.24px;letter-spacing:-0.28px">Vivid V2.7</div>
<div class="abs td" style="left:1273px;top:401.24px;letter-spacing:0.85px">01-01-2026</div>
<div class="abs td" style="left:1422px;top:401.24px;letter-spacing:0.85px">02-04-2026</div>
<div class="abs td" style="left:1571.5px;top:401.24px;letter-spacing:-0.23px">Demo - DEMO User</div>
<div class="abs badge" style="left:997px;top:400.54px">In-Scope</div>
<div class="abs" style="left:18px;top:474.43px;width:14.4px;height:14.4px;border:1.3px solid #1f1f1f;border-radius:3px;background:#fff"></div>
<svg class="abs" style="left:79px;top:463.03px" width="22" height="22" viewBox="0 0 22 22"><circle cx="9.4" cy="8.9" r="5.8" fill="none" stroke="#5e6a75" stroke-width="2.9"/><path d="M13.8 13.2 L18.4 17.8" stroke="#5e6a75" stroke-width="3.4" stroke-linecap="round"/></svg>
<div class="abs td" style="left:149px;top:464.53px;letter-spacing:0.39px">ECO-000000161828</div>
<div class="abs td" style="left:369.2px;top:464.53px;letter-spacing:-0.3px">MajorRel1</div>
<div class="abs td" style="left:510px;top:464.53px;letter-spacing:-0.3px">VIV02.6</div>
<div class="abs td" style="left:672px;top:464.53px;letter-spacing:-0.28px">Vivid V2.6</div>
<div class="abs td" style="left:1273px;top:464.53px;letter-spacing:0.85px">01-10-2025</div>
<div class="abs td" style="left:1422px;top:464.53px;letter-spacing:0.85px">30-12-2025</div>
<div class="abs td" style="left:1571.5px;top:464.53px;letter-spacing:-0.23px">Demo - DEMO User</div>
<div class="abs badge" style="left:997px;top:463.83px">In-Scope</div>
</div>
<div class="abs" style="left:1836px;top:738px;width:16px;height:16.5px;border:1px solid #bfc4cb;border-radius:5px;background:#fff"></div>
<svg class="abs" style="left:1836px;top:738px" width="16" height="17"><path d="M4 10 L8 5.4 L12 10 Z" fill="#2e4fbd"/></svg>
<div class="abs" style="left:1836px;top:755.5px;width:16px;height:170.5px;border:1px solid #bfc4cb;border-radius:7px;background:#fff"></div>
<div class="abs" style="left:1836px;top:1203.3px;width:16px;height:16.7px;border:1px solid #bfc4cb;border-radius:5px;background:#fff"></div>
<svg class="abs" style="left:1836px;top:1203.3px" width="16" height="17"><path d="M4 6 L8 10.8 L12 6 Z" fill="#2e4fbd"/></svg>
<div class="abs sin" style="left:202.2px;width:183.4px"><div class="sclip" style="width:152.4px"><span>Search System ID &amp; E</span></div></div>
<div class="abs sin" style="left:422.4px;width:104.1px"><div class="sclip" style="width:73.1px"><span>Search Re</span></div></div>
<div class="abs sin" style="left:563px;width:125.7px"><div class="sclip" style="width:94.7px"><span>Search Proje</span></div></div>
<div class="abs sin" style="left:725.2px;width:284.7px"><div class="sclip" style="width:253.7px"><span>Search Project Name &amp; Enter</span></div></div>
<div class="abs sin" style="left:1045.2px;width:244.7px"><div class="sclip" style="width:213.7px"><span>Search Project Status &amp; Enter</span></div></div>
<div class="abs sin" style="left:1326.5px;width:112.3px"><div class="sclip" style="width:81.3px"><span>Search Star</span></div></div>
<div class="abs sin" style="left:1475.3px;width:113.0px"><div class="sclip" style="width:82.0px"><span>Search End</span></div></div>
<div class="abs sin" style="left:1624.2px;width:193.8px"><div class="sclip" style="width:162.8px"><span>Search Project Manage</span></div></div>
<div class="abs" style="left:26px;top:1328px;width:1854px;height:1px;background:#dde0e6"></div>
<div class="abs" style="left:54.3px;top:1363px;font-size:16.8px;line-height:20px;color:#1e1e1e;-webkit-text-stroke:0.3px #1e1e1e">Page Size</div>
<div class="abs" style="left:136.5px;top:1350.5px;width:154.5px;height:48px;border:1px solid #c9cdd6;border-radius:7px;background:#fff"></div>
<div class="abs" style="left:150.7px;top:1366.5px;font-size:17px;line-height:20px;color:#666e76">20</div>
<svg class="abs" style="left:270px;top:1370px" width="14" height="10"><path d="M3.6 3.3 H11 L7.3 7 Z" fill="#666"/></svg>
<div class="abs" style="left:814.4px;top:1360.5px;font-size:17px;line-height:20px;color:#1e1e1e;letter-spacing:-0.1px;-webkit-text-stroke:0.2px #1e1e1e">Showing 1 to 20 of 24 entries</div>
<div class="abs" style="left:1615.5px;top:1349.7px;width:236.5px;height:41.6px;border:1px solid #dee2e6;border-radius:4px;background:#fff"></div>
<div class="abs" style="left:1708px;top:1349.7px;width:40px;height:41.6px;background:#007bff"></div>
<div class="abs" style="left:1786.5px;top:1349.7px;width:1px;height:41.6px;background:#dee2e6"></div>
<div class="abs" style="left:1748px;top:1349.7px;width:1px;height:41.6px;background:#dee2e6"></div>
<div class="abs pg" style="left:1630.3px;color:#6c757d">Previous</div>
<div class="abs pg" style="left:1722.5px;color:#fff">1</div>
<div class="abs pg" style="left:1761.5px;color:#5a6168">2</div>
<div class="abs pg" style="left:1801.5px;color:#5a6168">Next</div>
<div class="abs" style="left:1906px;top:173px;width:14px;height:1270px;background:#e9ebee"></div>
<div class="abs" style="left:1906px;top:1433.5px;width:16px;height:14px;background:#e4e7eb;border:1px solid #c3c8ce;border-radius:4px"></div>
<div class="abs" style="left:1906px;top:177.5px;width:16px;height:1255px;background:#d3d7dc;border:1px solid #b9bfc6;border-radius:4px"></div>
<svg class="abs" style="left:1906px;top:1433px" width="14" height="10"><path d="M3.4 5.4 H11.6 L7.5 10.6 Z" fill="#2e4fbd"/></svg>
</body></html>
